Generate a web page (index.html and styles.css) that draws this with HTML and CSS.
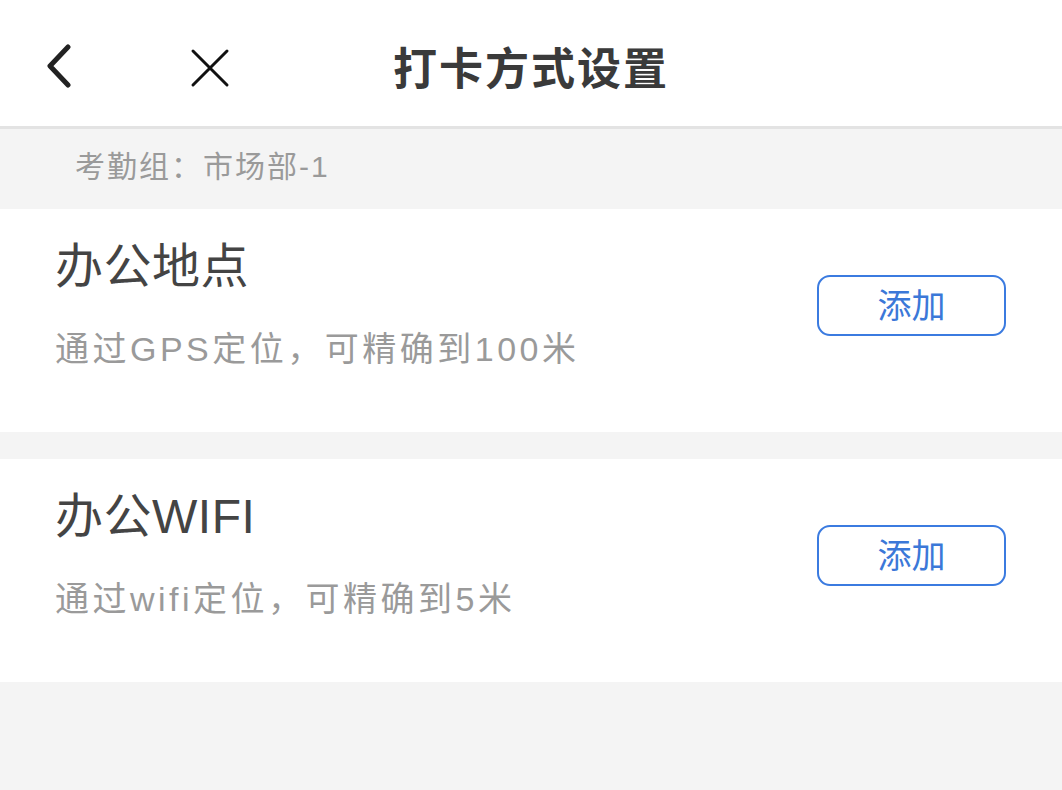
FILE: index.html
```html
<!DOCTYPE html>
<html lang="zh-CN">
<head>
  <meta charset="UTF-8">
  <meta name="viewport" content="width=device-width, initial-scale=1.0">
  <title>打卡方式设置</title>
  <link rel="stylesheet" href="styles.css">
</head>
<body>
  <header class="topbar">
    <div class="topbar-left">
      <span class="icon-btn back">
        <svg width="30" height="44" viewBox="0 0 30 44">
          <polyline points="24,3 6,22 24,41" fill="none" stroke="#222" stroke-width="5" stroke-linecap="round" stroke-linejoin="round"/>
        </svg>
      </span>
      <span class="icon-btn close">
        <svg width="40" height="40" viewBox="0 0 40 40">
          <path d="M3 3 L37 37 M37 3 L3 37" stroke="#111" stroke-width="3" stroke-linecap="round"/>
        </svg>
      </span>
    </div>
    <h1 class="title">打卡方式设置</h1>
    <div></div>
  </header>

  <div class="group-bar">考勤组：市场部-1</div>

  <section class="card">
    <div class="card-info">
      <div class="card-title">办公地点</div>
      <div class="card-desc">通过GPS定位，可精确到100米</div>
    </div>
    <button class="add-btn">添加</button>
  </section>

  <div class="spacer"></div>

  <section class="card">
    <div class="card-info">
      <div class="card-title">办公WIFI</div>
      <div class="card-desc">通过wifi定位，可精确到5米</div>
    </div>
    <button class="add-btn">添加</button>
  </section>
</body>
</html>
```

FILE: styles.css
```css
body {
  margin: 0;
  background: #f4f4f4;
  font-family: "Liberation Sans", "Noto Sans CJK SC", sans-serif;
  color: #333;
  min-height: 790px;
}

.topbar {
  height: 126px;
  background: #fff;
  border-bottom: 3px solid #e3e3e3;
  display: grid;
  grid-template-columns: 1fr auto 1fr;
  align-items: center;
}
.topbar-left {
  display: flex;
  align-items: center;
  padding-left: 44px;
  gap: 116px;
  padding-top: 6px;
}
.icon-btn {
  display: flex;
}
.icon-btn.close {
  margin-top: 4px;
}
.title {
  margin: 0;
  font-size: 44px;
  font-weight: 700;
  color: #3a3a3a;
  letter-spacing: 2px;
  padding-top: 6px;
}

.group-bar {
  height: 80px;
  line-height: 76px;
  padding-left: 75px;
  font-size: 30px;
  letter-spacing: 2px;
  color: #9a9a9a;
}

.card {
  height: 223px;
  background: #fff;
  display: flex;
  justify-content: space-between;
  align-items: flex-start;
  padding: 0 56px 0 55px;
}
.card-info {
  padding-top: 27px;
}
.card-title {
  font-size: 48px;
  line-height: 62px;
  letter-spacing: 0.5px;
  color: #444;
}
.card-desc {
  margin-top: 27px;
  font-size: 34px;
  line-height: 48px;
  letter-spacing: 3.5px;
  color: #9a9a9a;
}
.add-btn {
  margin-top: 66px;
  width: 189px;
  height: 61px;
  border: 2.5px solid #3b7be0;
  border-radius: 13px;
  background: #fff;
  color: #3b78d8;
  font-family: inherit;
  font-size: 34px;
  padding: 0;
  line-height: 1;
}

.spacer {
  height: 27px;
}
```
